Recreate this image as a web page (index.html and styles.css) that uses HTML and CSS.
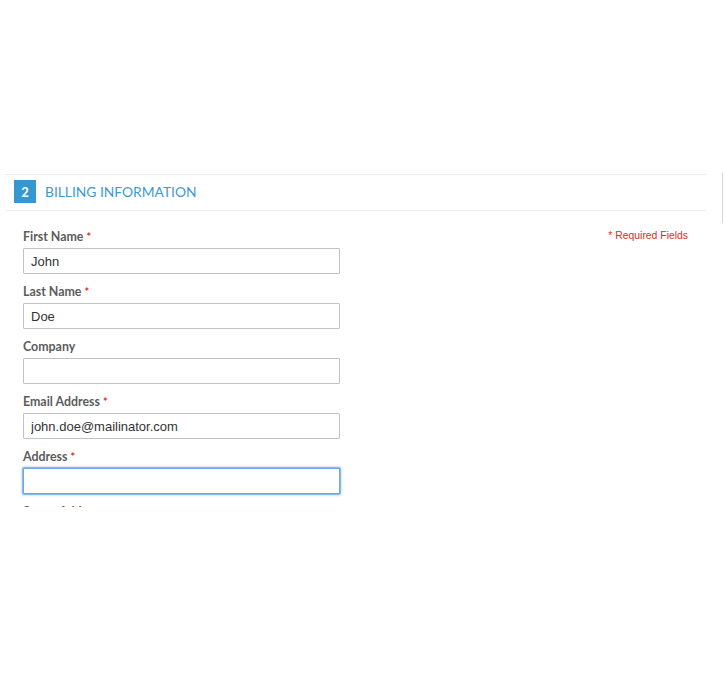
FILE: index.html
```html
<!DOCTYPE html>
<html lang="en">
<head>
<meta charset="utf-8">
<title>Billing Information</title>
<link rel="stylesheet" href="styles.css">
</head>
<body>
<div class="viewport">
  <div class="scroll-edge"></div>
  <section class="checkout-step">
    <div class="step-title">
      <span class="step-num">2</span>
      <span class="step-name">BILLING INFORMATION</span>
    </div>
    <div class="step-body">
      <form class="fields">
        <div class="field">
          <label class="label">First Name <em class="req">*</em></label>
          <input class="input" type="text" value="John">
        </div>
        <div class="field">
          <label class="label">Last Name <em class="req">*</em></label>
          <input class="input" type="text" value="Doe">
        </div>
        <div class="field">
          <label class="label">Company</label>
          <input class="input" type="text" value="">
        </div>
        <div class="field">
          <label class="label">Email Address <em class="req">*</em></label>
          <input class="input" type="text" value="john.doe@mailinator.com">
        </div>
        <div class="field">
          <label class="label">Address <em class="req">*</em></label>
          <input class="input focused" type="text" value="">
        </div>
        <div class="field">
          <label class="label">Street Address <em class="req">*</em></label>
          <input class="input" type="text" value="">
        </div>
      </form>
      <p class="required-note">* Required Fields</p>
    </div>
  </section>
</div>
</body>
</html>
```

FILE: styles.css
```css
html, body {
  margin: 0;
  padding: 0;
  background: #fff;
}

.viewport {
  position: relative;
  height: 507px;
  overflow: hidden;
  padding-top: 174px;
  box-sizing: border-box;
}

.scroll-edge {
  position: absolute;
  left: 722px;
  top: 173px;
  width: 1px;
  height: 50px;
  background: #d4d4d4;
}

.checkout-step {
  margin: 0 19px 0 5px;
}

.step-title {
  display: flex;
  align-items: center;
  gap: 9px;
  height: 35px;
  padding-left: 9px;
  border-top: 1px solid #ececec;
  border-bottom: 1px solid #ececec;
  box-sizing: content-box;
}

.step-num {
  display: flex;
  align-items: center;
  justify-content: center;
  width: 22px;
  height: 23px;
  margin-top: -2px;
  background: #3598d0;
  color: #fff;
  font-family: "Lato", "Liberation Sans", sans-serif;
  font-weight: 700;
  font-size: 13px;
}

.step-name {
  margin-top: -3px;
  color: #3c9ad2;
  font-family: "Lato", "Liberation Sans", sans-serif;
  font-size: 13.8px;
  font-weight: 400;
}

.step-body {
  display: flex;
  justify-content: space-between;
  align-items: flex-start;
  padding: 17px 18px 0 18px;
}

.fields {
  display: flex;
  flex-direction: column;
  width: 318px;
}

.field {
  display: flex;
  flex-direction: column;
  gap: 2px;
  margin-bottom: 9px;
}

.label {
  font-family: "Lato", "Open Sans", sans-serif;
  font-weight: 700;
  font-size: 12.4px;
  line-height: 18px;
  color: #5c5c5c;
}

.req {
  font-style: normal;
  color: #e02b27;
  font-size: 11px;
}

.input {
  box-sizing: border-box;
  width: 317px;
  height: 26px;
  margin: 0;
  padding: 0 7px;
  border: 1px solid #c2c2c2;
  border-radius: 1px;
  background: #fff;
  font-family: "Liberation Sans", Arial, sans-serif;
  font-size: 13px;
  color: #333;
  outline: none;
}

.input.focused {
  border-color: #6ea8de;
  box-shadow: 0 0 0 1px #8cbbe6, 0 0 3px 1px rgba(104, 168, 224, 0.6);
}

.required-note {
  margin: -1px 0 0;
  font-family: "Liberation Sans", Arial, sans-serif;
  font-size: 10.4px;
  line-height: 18px;
  color: #e02b27;
}
```
